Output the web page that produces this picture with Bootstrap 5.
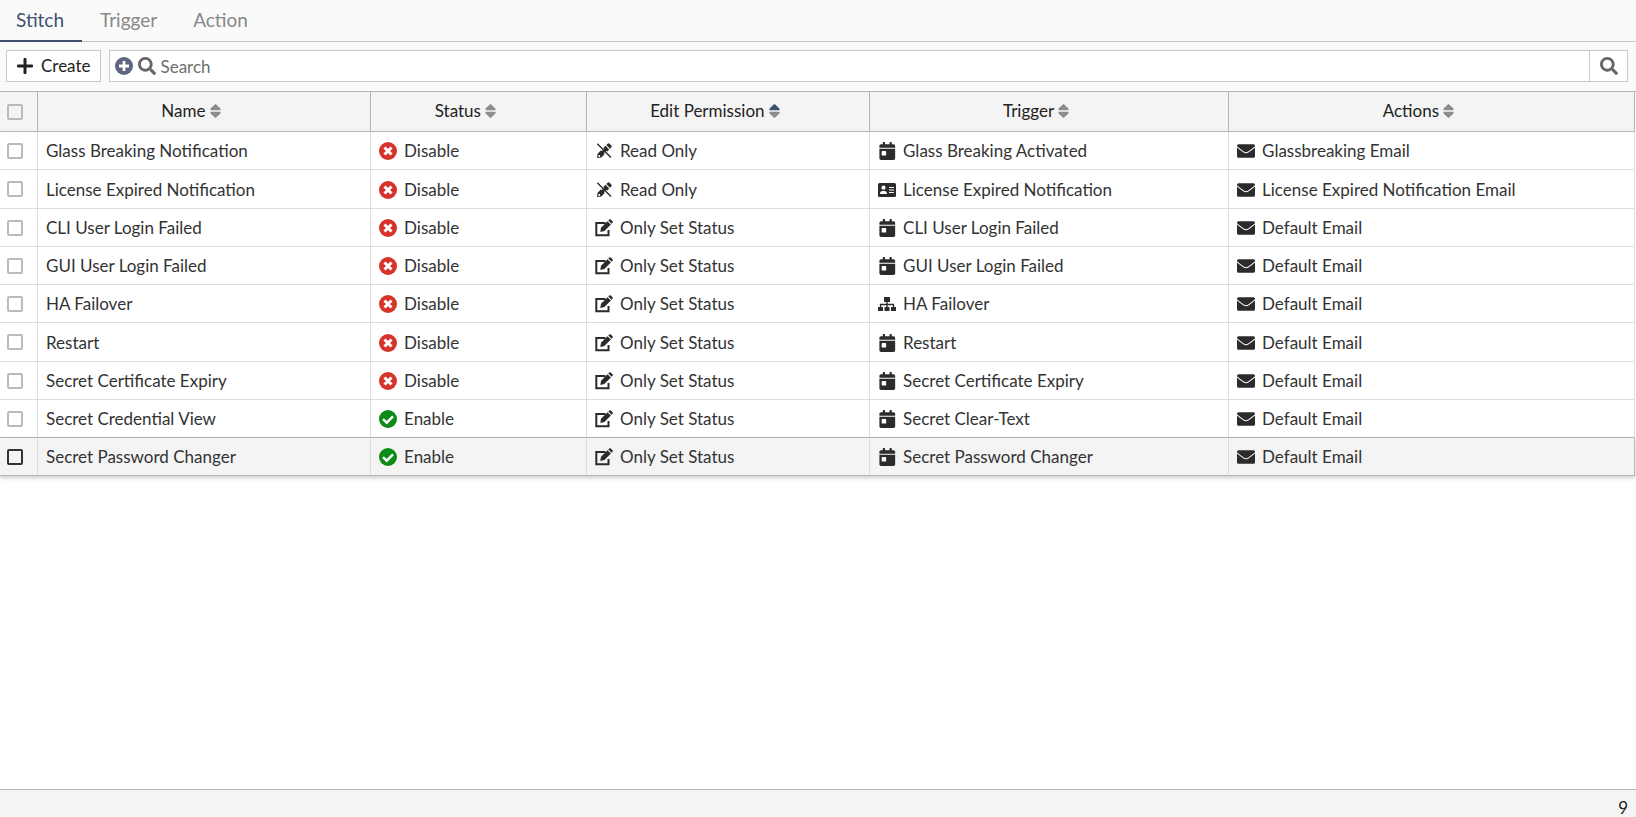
<!DOCTYPE html>
<html lang="en">
<head>
<meta charset="utf-8">
<meta name="viewport" content="width=device-width, initial-scale=1">
<title>Automation - Stitch</title>
<link href="https://cdn.jsdelivr.net/npm/bootstrap@5.3.0/dist/css/bootstrap.min.css" rel="stylesheet">
<style>
  body { font-family: Lato, "Liberation Sans", sans-serif; font-size: 17px; line-height: 24px; color: #333; background: #fff; }
  .view-tabs { height: 42px; background: #fafafa; border-bottom: 1px solid #c8c8c8; }
  .view-tabs .nav-link { height: 42px; padding: 8px 18px 0; font-size: 19px; line-height: 24px; color: #888; border-bottom: 2px solid transparent; }
  .view-tabs .nav-link:first-child { padding-left: 16px; }
  .view-tabs .nav-link.active { color: #3f4f70; border-color: #3f4f70; }
  .toolbar { padding: 8px 8px 9px 6px; background: #fafafa; }
  .tool-btn { height: 32px; padding: 0 9px; line-height: 30px; font-size: 17px; color: #222; background: #fff; border: 1px solid #c8c8c8; border-radius: 0; gap: 7px; }
  .search-box { height: 32px; padding-left: 5px; gap: 5px; background: #fff; border: 1px solid #c8c8c8; }
  .search-box input { height: 28px; padding: 0; font-size: 17px; background: transparent; border: 0; border-radius: 0; }
  .search-box input::placeholder { color: #6e6e6e; }
  .search-box .go { width: 38px; height: 30px; padding: 0; border-width: 0 0 0 1px; }
  .search-box label, .search-box .go { color: #666; }
  .search-box .add { color: #5c6680; }
  .ico { width: 18px; height: 18px; flex: none; fill: currentColor; }
  .grid-wrap { border-top: 1px solid #b5b5b5; padding-right: 1px; }
  .stitches { table-layout: fixed; width: 100%; border-collapse: separate; border-spacing: 0; }
  .stitches th { height: 40px; padding: 0 26px 1px 0; font-weight: 400; text-align: center; white-space: nowrap; color: #222; background: #f4f4f4; border-right: 1px solid #b5b5b5; border-bottom: 1px solid #b5b5b5; }
  .stitches td { height: 38px; padding: 1px 8px 0; border-right: 1px solid #ddd; border-bottom: 1px solid #ddd; white-space: nowrap; }
  .stitches tr:nth-child(4n+2) td { height: 39px; }
  .stitches th:first-child, .stitches td:first-child { padding: 0 0 0 7px; text-align: left; }
  .stitches .form-check-input { display: block; width: 16px; height: 16px; margin: 0; border: 2px solid #bbb; border-radius: 2px; background-color: transparent; }
  .stitches tr:nth-last-child(2) td { border-bottom-color: #b5b5b5; }
  .stitches .current { box-shadow: 0 2px 4px rgba(0, 0, 0, .2); }
  .stitches .current td { background: #f4f4f4; border-bottom-color: #b5b5b5; }
  .stitches .current td:last-child { border-right-color: #b5b5b5; }
  .stitches .current .form-check-input { border-color: #333; }
  .with-icon { gap: 7px; }
  .sort { width: 11px; height: 14px; vertical-align: -1px; fill: #8c8c8c; }
  .sort .on { fill: #3f4f70; }
  .glyph { color: #2b2b2b; }
  .bad { color: #d6342a; }
  .good { color: #0d8b17; }
  .status-bar { padding: 9px 8px 0; line-height: 18px; background: #f4f4f4; border-top: 1px solid #b5b5b5; color: #222; }
</style>
</head>
<body class="d-flex flex-column vh-100 overflow-hidden">

<svg class="d-none" aria-hidden="true">
  <symbol id="i-plus" viewBox="0 0 18 18"><path d="M7.500 2a1 1 0 0 1 1-1h1a1 1 0 0 1 1 1v5.500H16a1 1 0 0 1 1 1v1a1 1 0 0 1-1 1h-5.500V16a1 1 0 0 1-1 1h-1a1 1 0 0 1-1-1v-5.500H2a1 1 0 0 1-1-1v-1a1 1 0 0 1 1-1h5.500z"/></symbol>
  <symbol id="i-add" viewBox="0 0 18 18"><circle cx="9" cy="9" r="9"/><path d="M9 4v10M4 9h10" stroke="#fff" stroke-width="2.800"/></symbol>
  <symbol id="i-search" viewBox="0 0 512 512"><path d="M505 442.700L405.300 343c-4.500-4.500-10.600-7-17-7H372c27.600-35.300 44-79.700 44-128C416 93.100 322.900 0 208 0S0 93.100 0 208s93.100 208 208 208c48.300 0 92.700-16.400 128-44v16.300c0 6.400 2.500 12.500 7 17l99.700 99.700c9.400 9.400 24.600 9.400 33.900 0l28.300-28.300c9.400-9.400 9.400-24.600.1-34zM208 336c-70.700 0-128-57.200-128-128 0-70.700 57.200-128 128-128 70.700 0 128 57.200 128 128 0 70.700-57.200 128-128 128z"/></symbol>
  <symbol id="i-sort" viewBox="0 0 11 14"><path d="M4.800.4q.7-.7 1.400 0L10.400 4.600Q11 6 10 6.200H1Q0 6 .6 4.600z"/><path d="M4.800 13.600q.7.7 1.400 0L10.400 9.400Q11 8 10 7.800H1Q0 8 .6 9.400z"/></symbol>
  <symbol id="i-disable" viewBox="0 0 18 18"><circle cx="9" cy="9" r="9"/><path d="M5.500 5.500l7 7M12.500 5.500l-7 7" stroke="#fff" stroke-width="3"/></symbol>
  <symbol id="i-enable" viewBox="0 0 18 18"><circle cx="9" cy="9" r="9"/><path d="M4 9.200l3.700 3.500 6.300-6.400" fill="none" stroke="#fff" stroke-width="2.400"/></symbol>
  <symbol id="i-readonly" viewBox="0 0 18 18"><path d="M2 16l.6-4.300 7.900-7.900 3.700 3.700-7.900 7.900zM11.300 3l1.300-1.300q1-.9 2 0l1.700 1.700q.9 1 0 2L15 6.700z"/><path d="M4.200 4.200L14.500 14.500" stroke="#fff" stroke-width="3.200"/><path d="M2.300 1.800L16 15.500" stroke="currentColor" stroke-width="1.400"/><path d="M6.500 11.500L11.500 6.500" stroke="currentColor" stroke-width="2.800"/><circle cx="4.200" cy="13.900" r="1" fill="#fff"/></symbol>
  <symbol id="i-edit" viewBox="0 0 18 18"><path d="M10.500 4H1.300v12.200h12.200V11" fill="none" stroke="currentColor" stroke-width="2"/><path d="M5.300 12.900l.7-4.200L12.500 2.200l3.400 3.400L9.400 12.100zM13.300 1.400l.9-.9q.8-.7 1.600 0l1.700 1.700q.8.800 0 1.600l-.9.900z"/></symbol>
  <symbol id="i-calendar" viewBox="-40 0 512 512"><path d="M0 464c0 26.500 21.500 48 48 48h352c26.500 0 48-21.500 48-48V192H0v272zm64-192c0-8.800 7.200-16 16-16h96c8.800 0 16 7.200 16 16v96c0 8.800-7.200 16-16 16H80c-8.800 0-16-7.200-16-16v-96zM400 64h-48V16c0-8.800-7.200-16-16-16h-32c-8.800 0-16 7.200-16 16v48H160V16c0-8.800-7.200-16-16-16h-32c-8.800 0-16 7.200-16 16v48H48C21.500 64 0 85.500 0 112v48h448v-48c0-26.500-21.500-48-48-48z"/></symbol>
  <symbol id="i-card" viewBox="0 0 18 18"><path d="M1.500 2h15A1.500 1.500 0 0 1 18 3.500v11a1.500 1.500 0 0 1-1.500 1.500h-15A1.500 1.500 0 0 1 0 14.500v-11A1.500 1.500 0 0 1 1.500 2z"/><g fill="#fff"><circle cx="5.500" cy="6.700" r="2.100"/><path d="M2 13q0-3 2.500-3h2Q9 10 9 13zM11 6h5v1.100h-5zM11 8.500h5v1.100h-5zM11 11h5v1.100h-5z"/></g></symbol>
  <symbol id="i-tree" viewBox="0 0 18 18"><path d="M6 2h6v5H6zM0 12h5v4H0zM6.500 12h5v4h-5zM13 12h5v4h-5z"/><path d="M9 6v7M2.500 13V9.500h13V13" fill="none" stroke="currentColor" stroke-width="1.300"/></symbol>
  <symbol id="i-mail" viewBox="0 0 18 18"><path d="M1.500 2.200h15Q18 2.200 18 3.700v.5q-3.500 3-6.800 5.200-2.200 1.500-4.400 0Q3.500 7.200 0 4.200v-.5Q0 2.200 1.500 2.200zM0 5.500q3 2.600 6.200 4.800 2.800 2 5.600 0Q15 8.100 18 5.500v8.800q0 1.500-1.500 1.500h-15Q0 15.800 0 14.300z"/></symbol>
</svg>

<nav class="view-tabs nav flex-nowrap flex-shrink-0">
  <a class="nav-link active" href="#" aria-current="page">Stitch</a>
  <a class="nav-link" href="#">Trigger</a>
  <a class="nav-link" href="#">Action</a>
</nav>

<div class="toolbar d-flex gap-2 flex-shrink-0">
  <button type="button" class="tool-btn btn d-flex align-items-center"><svg class="ico"><use href="#i-plus"/></svg>Create</button>
  <form class="search-box d-flex align-items-center flex-grow-1" onsubmit="return false">
    <button type="button" class="add btn p-0 border-0 d-flex" aria-label="Add filter"><svg class="ico"><use href="#i-add"/></svg></button>
    <label for="q" class="d-flex"><svg class="ico"><use href="#i-search"/></svg></label>
    <input id="q" type="text" class="form-control shadow-none" placeholder="Search" aria-label="Search">
    <button type="submit" class="tool-btn go btn d-flex align-items-center justify-content-center flex-shrink-0" aria-label="Run search"><svg class="ico"><use href="#i-search"/></svg></button>
  </form>
</div>

<main class="flex-grow-1 overflow-hidden">
  <div class="grid-wrap">
    <table class="stitches">
      <colgroup><col style="width:38px"><col style="width:20.370%"><col style="width:13.210%"><col style="width:17.310%"><col style="width:21.960%"><col></colgroup>
      <thead>
        <tr>
          <th scope="col"><input class="form-check-input" type="checkbox" aria-label="Select all"></th>
          <th scope="col">Name <svg class="sort"><use href="#i-sort"/></svg></th>
          <th scope="col">Status <svg class="sort"><use href="#i-sort"/></svg></th>
          <th scope="col" aria-sort="ascending">Edit Permission <svg class="sort" viewBox="0 0 11 14"><path class="on" d="M4.800.4q.7-.7 1.400 0L10.400 4.600Q11 6 10 6.200H1Q0 6 .6 4.600z"/><path d="M4.800 13.600q.7.7 1.400 0L10.400 9.400Q11 8 10 7.800H1Q0 8 .6 9.400z"/></svg></th>
          <th scope="col">Trigger <svg class="sort"><use href="#i-sort"/></svg></th>
          <th scope="col">Actions <svg class="sort"><use href="#i-sort"/></svg></th>
        </tr>
      </thead>
      <tbody id="rows"></tbody>
    </table>
  </div>
</main>

<footer class="status-bar text-end flex-shrink-0">9</footer>

<script src="https://cdn.jsdelivr.net/npm/bootstrap@5.3.0/dist/js/bootstrap.bundle.min.js"></script>
<script>
  // name, enabled, permission, trigger icon, trigger, action
  const stitches = [
    ['Glass Breaking Notification', false, 'Read Only', 'calendar', 'Glass Breaking Activated', 'Glassbreaking Email'],
    ['License Expired Notification', false, 'Read Only', 'card', 'License Expired Notification', 'License Expired Notification Email'],
    ['CLI User Login Failed', false, 'Only Set Status', 'calendar', 'CLI User Login Failed', 'Default Email'],
    ['GUI User Login Failed', false, 'Only Set Status', 'calendar', 'GUI User Login Failed', 'Default Email'],
    ['HA Failover', false, 'Only Set Status', 'tree', 'HA Failover', 'Default Email'],
    ['Restart', false, 'Only Set Status', 'calendar', 'Restart', 'Default Email'],
    ['Secret Certificate Expiry', false, 'Only Set Status', 'calendar', 'Secret Certificate Expiry', 'Default Email'],
    ['Secret Credential View', true, 'Only Set Status', 'calendar', 'Secret Clear-Text', 'Default Email'],
    ['Secret Password Changer', true, 'Only Set Status', 'calendar', 'Secret Password Changer', 'Default Email']
  ];
  const cell = (icon, tone, text) =>
    `<td><div class="with-icon d-flex align-items-center"><svg class="ico ${tone}"><use href="#i-${icon}"/></svg>${text}</div></td>`;
  document.getElementById('rows').innerHTML = stitches.map(([name, on, perm, icon, trigger, action], i) =>
    `<tr class="${i === stitches.length - 1 ? 'current' : ''}">
      <td><input class="form-check-input" type="checkbox" aria-label="Select ${name}"></td>
      <td>${name}</td>
      ${cell(on ? 'enable' : 'disable', on ? 'good' : 'bad', on ? 'Enable' : 'Disable')}
      ${cell(perm === 'Read Only' ? 'readonly' : 'edit', 'glyph', perm)}
      ${cell(icon, 'glyph', trigger)}
      ${cell('mail', 'glyph', action)}
    </tr>`).join('');
</script>
</body>
</html>
